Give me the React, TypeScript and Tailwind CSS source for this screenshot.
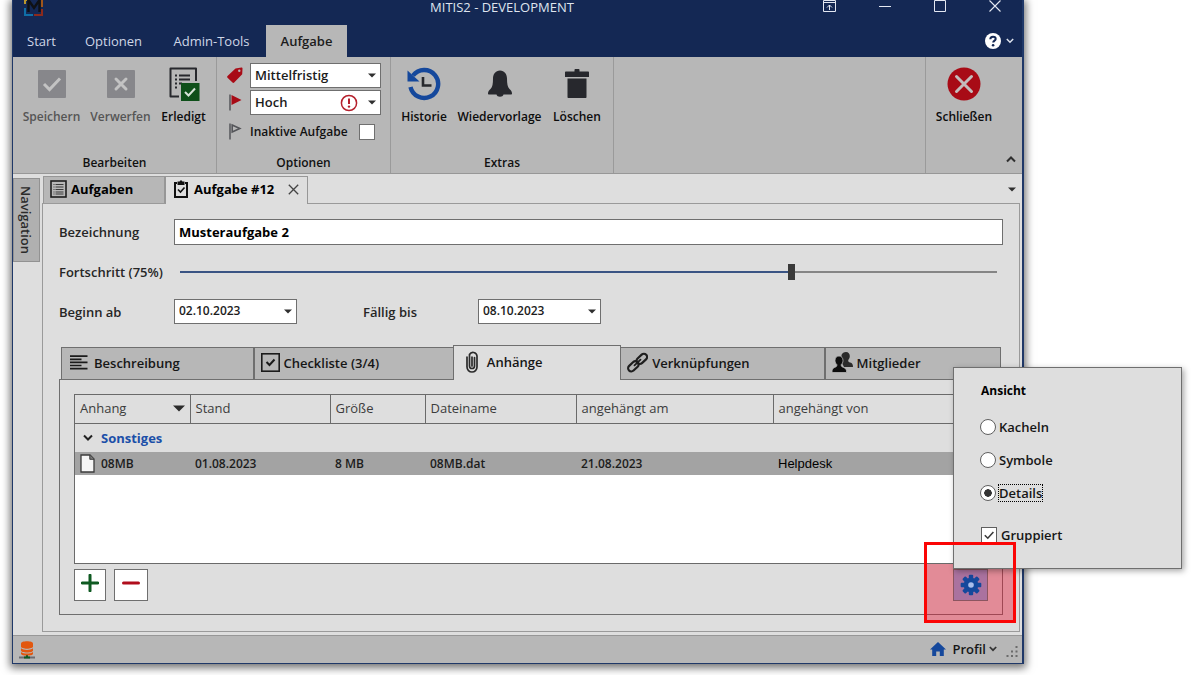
import React, { useState } from "react";
import type { ReactNode } from "react";

const caret = (
  <svg width="8" height="5" viewBox="0 0 8 5" className="block text-[#2f2f2f]" aria-hidden="true">
    <path d="M0 0.5h8L4 4.5z" fill="currentColor" />
  </svg>
);

function DropDown({
  label,
  options,
  className,
  children,
}: {
  label: string;
  options: string[];
  className: string;
  children?: ReactNode;
}) {
  return (
    <div className={`relative h-[25px] ${className}`}>
      <select
        id={label}
        aria-label={label}
        className="block h-full w-full appearance-none border border-[#6f6f6f] bg-white pb-px pl-1 leading-4 text-[#1c1c1c] outline-none"
      >
        {options.map((o) => (
          <option key={o}>{o}</option>
        ))}
      </select>
      <span className="pointer-events-none absolute inset-y-0 right-[5px] flex items-center gap-[10px]">
        {children}
        {caret}
      </span>
    </div>
  );
}

function RibbonButton({
  label,
  icon,
  className,
  disabled,
}: {
  label: string;
  icon: ReactNode;
  className: string;
  disabled?: boolean;
}) {
  return (
    <button
      disabled={disabled}
      className={`flex flex-col items-center gap-2 pt-[10px] text-[12px] leading-4 font-semibold whitespace-nowrap ${
        disabled ? "text-[#555]" : "text-[#0c0c0c]"
      } ${className}`}
    >
      <span className="flex h-[34px] items-center">{icon}</span>
      {label}
    </button>
  );
}

function RibbonGroup({ title, className, children }: { title: string; className: string; children: ReactNode }) {
  return (
    <section className={`flex flex-col justify-between border-r border-[#9a9a9a] pb-[2px] ${className}`}>
      {children}
      <h2 className="text-center text-[12px] leading-4 font-semibold text-[#111]">{title}</h2>
    </section>
  );
}

const SaveIcon = () => (
  <svg width="28" height="28" viewBox="0 0 28 28">
    <rect width="28" height="28" rx="1" fill="#87878b" />
    <path d="M6 14l5.5 5.5L22 8.500" fill="none" stroke="#c3c3c3" strokeWidth="3" />
  </svg>
);
const DiscardIcon = () => (
  <svg width="28" height="28" viewBox="0 0 28 28">
    <rect width="28" height="28" rx="1" fill="#87878b" />
    <path d="M9 9l10 10M19 9L9 19" fill="none" stroke="#c3c3c3" strokeWidth="3" strokeLinecap="round" />
  </svg>
);
const DoneIcon = () => (
  <svg width="32" height="34" viewBox="0 0 32 34">
    <path d="M28 14V1.500H2.500v28H11" fill="none" stroke="#27282d" strokeWidth="2" strokeLinejoin="round" />
    <path d="M11 8.500h11M11 12.500h11M11 16.500h3" stroke="#27282d" strokeWidth="2" />
    <path d="M7 8.500h2M7 12.500h2M7 16.500h2M7 20.500h2" stroke="#27282d" strokeWidth="2.200" />
    <rect x="13" y="16" width="18.500" height="18" fill="#0e4f19" />
    <path d="M17 25l3.500 3.500L27 21.500" fill="none" stroke="#d7e3d8" strokeWidth="2" />
  </svg>
);
const HistoryIcon = () => (
  <svg width="34" height="34" viewBox="0 0 34 34">
    <path d="M6 8.500A14 14 0 1 1 3.500 20" fill="none" stroke="#15489c" strokeWidth="4.400" />
    <path d="M0.500 3.500L12.500 14.500H0.500z" fill="#15489c" />
    <path d="M16 10v8.500H24.500" fill="none" stroke="#27282d" strokeWidth="2.600" />
  </svg>
);
const BellIcon = () => (
  <svg width="24" height="28" viewBox="0 0 24 28">
    <path
      d="M12 0.500C7.500 .8 5 4 5 8.500c0 5-.5 8.500-2.500 10.500C1 20.500 0 21.500 0 23.500c0 .6.400 1 1 1h7.500c.4 1.300 1.700 2.300 3.500 2.300s3.100-1 3.500-2.300H23c.6 0 1-.4 1-1 0-2-1-3-2.500-4.500-2-2-2.500-5.500-2.500-10.500C19 4 16.500 .8 12 .5z"
      fill="#27282d"
    />
  </svg>
);
const TrashIcon = () => (
  <svg width="24" height="30" viewBox="0 0 24 30">
    <path d="M9.500 2.500V1c0-.6.4-1 1-1h3c.6 0 1 .4 1 1v1.500h8.500c.6 0 1 .4 1 1V8H0V3.500c0-.6.400-1 1-1z" fill="#27282d" />
    <path d="M2.500 9.500h19V28c0 .6-.4 1-1 1h-17c-.6 0-1-.4-1-1z" fill="#27282d" />
  </svg>
);
const CloseIcon = () => (
  <svg width="34" height="34" viewBox="0 0 34 34">
    <circle cx="17" cy="17" r="16.500" fill="#a80b16" />
    <path d="M9.500 9.500l15 15M24.500 9.500l-15 15" stroke="#c4bcbc" strokeWidth="3" strokeLinecap="round" />
  </svg>
);

function Chevron({ up, className = "" }: { up?: boolean; className?: string }) {
  return (
    <svg width="10" height="7" viewBox="0 0 10 7" className={className} aria-hidden="true">
      <path d={up ? "M1 5.500l4-4 4 4" : "M1 1.500l4 4 4-4"} fill="none" stroke="currentColor" strokeWidth="2" />
    </svg>
  );
}

function TitleBar() {
  return (
    <header className="bg-[#142854] text-white">
      <div className="flex h-[25px] items-start pl-[11px]">
        <svg width="20" height="16" viewBox="0 0 20 16">
          <path d="M1 0v4M1 0h2" stroke="#b9962c" strokeWidth="2" />
          <path d="M1 8v7h8" fill="none" stroke="#0f6fa6" strokeWidth="2" />
          <path d="M10 15h8V9" fill="none" stroke="#8c2a1c" strokeWidth="2" />
          <path d="M18 0v7" stroke="#a0561c" strokeWidth="2" />
          <path d="M4.500 12V0L10 8l5.500-8v12" fill="none" stroke="#0f1114" strokeWidth="2.400" />
        </svg>
        <h1 className="flex-1 pl-[158px] text-center text-[13px] leading-[14px] font-normal text-[#dfe4ee]">
          MITIS2 - DEVELOPMENT
        </h1>
        <div className="flex h-3">
          <button aria-label="Menüband anheften" className="flex w-[55px] items-end justify-center">
            <svg width="13" height="12" viewBox="0 0 13 12">
              <path d="M.5 .5h12v11H.5zM0 2.500h13M6.500 10V5M4 7.500L6.500 5 9 7.500" fill="none" stroke="#e4e8f2" />
            </svg>
          </button>
          <button aria-label="Minimieren" className="flex w-[55px] items-end justify-center">
            <svg width="12" height="12" viewBox="0 0 12 12">
              <path d="M0 6.500h12" stroke="#e4e8f2" />
            </svg>
          </button>
          <button aria-label="Maximieren" className="flex w-[55px] items-end justify-center">
            <svg width="12" height="12" viewBox="0 0 12 12">
              <path d="M.5 .5h11v11H.5z" fill="none" stroke="#e4e8f2" />
            </svg>
          </button>
          <button aria-label="Fenster schließen" className="flex w-[55px] items-end justify-center">
            <svg width="12" height="12" viewBox="0 0 12 12">
              <path d="M.5 .5l11 11M11.500 .5l-11 11" stroke="#e4e8f2" strokeWidth="1.100" />
            </svg>
          </button>
        </div>
      </div>
      <nav className="flex h-8 items-stretch text-[13px] leading-4 text-[#cfd6e6]">
        <button className="w-[57px]">Start</button>
        <button className="w-[87px]">Optionen</button>
        <button className="w-[109px]">Admin-Tools</button>
        <button className="w-[81px] bg-[#b7b7b7] font-semibold text-[#1c1c1c]">Aufgabe</button>
        <button aria-label="Hilfe" className="ml-auto flex items-center gap-[5px] pr-2">
          <svg width="16" height="16" viewBox="0 0 16 16">
            <circle cx="8" cy="8" r="8" fill="#fff" />
            <path d="M5.300 6.200C5.300 4.600 6.500 3.700 8 3.700s2.700.8 2.700 2.200C10.700 7.600 8.200 7.600 8.200 9.600" fill="none" stroke="#142854" strokeWidth="2" />
            <circle cx="8.100" cy="12.200" r="1.300" fill="#142854" />
          </svg>
          <svg width="8" height="6" viewBox="0 0 8 6">
            <path d="M.8 1L4 4.200 7.200 1" fill="none" stroke="#dfe4ee" strokeWidth="1.500" />
          </svg>
        </button>
      </nav>
    </header>
  );
}

function Ribbon() {
  return (
    <div className="flex h-[117px] border-b border-[#979797] bg-[#b7b7b7]">
      <RibbonGroup title="Bearbeiten" className="w-[204px]">
        <div className="flex pl-1">
          <RibbonButton disabled label="Speichern" icon={<SaveIcon />} className="w-[69px]" />
          <RibbonButton disabled label="Verwerfen" icon={<DiscardIcon />} className="w-[69px]" />
          <RibbonButton label="Erledigt" icon={<DoneIcon />} className="w-[57px]" />
        </div>
      </RibbonGroup>
      <RibbonGroup title="Optionen" className="w-[174px]">
        <div className="flex flex-col gap-[2px] pt-[6px] pl-[10px] text-[13px] leading-4 font-semibold">
          <div className="flex items-center gap-[7px]">
            <svg width="16" height="17" viewBox="0 0 16 17">
              <path d="M8.500 1.500L14.500 .5c.6 0 1 .4 1 1l-.3 5.700-8 8.300c-.5.500-1.200.500-1.700 0L.5 10.700c-.5-.5-.5-1.200 0-1.700z" fill="#a80b16" />
              <circle cx="12.300" cy="3.800" r="1.200" fill="#b7b7b7" />
            </svg>
            <DropDown label="Zeitraum" options={["Mittelfristig", "Kurzfristig", "Langfristig"]} className="w-[131px]" />
          </div>
          <div className="flex items-center gap-[7px]">
            <svg width="16" height="17" viewBox="0 0 16 17">
              <path d="M3 .5v16" stroke="#55565a" strokeWidth="1.500" />
              <path d="M4.500 1l10 5-10 5z" fill="#a80b16" />
            </svg>
            <DropDown label="Priorität" options={["Hoch", "Mittel", "Niedrig"]} className="w-[131px]">
              <svg width="18" height="18" viewBox="0 0 18 18">
                <circle cx="9" cy="9" r="7.600" fill="#fff" stroke="#b5202c" strokeWidth="1.500" />
                <path d="M9 4.500v5.500" stroke="#b5202c" strokeWidth="2" />
                <circle cx="9" cy="12.600" r="1.200" fill="#b5202c" />
              </svg>
            </DropDown>
          </div>
          <div className="mt-[6px] flex items-center gap-[7px]">
            <svg width="16" height="17" viewBox="0 0 16 17">
              <path d="M3 .5v16" stroke="#55565a" strokeWidth="1.500" />
              <path d="M5.200 2l7.600 3.500-7.600 3.500z" fill="none" stroke="#55565a" strokeWidth="1.600" />
            </svg>
            <label className="flex w-[125px] items-center justify-between text-[12px] whitespace-nowrap text-[#111]">
              Inaktive Aufgabe
              <input type="checkbox" className="size-4 appearance-none border border-[#6f6f6f] bg-white checked:bg-[#444]" />
            </label>
          </div>
        </div>
      </RibbonGroup>
      <RibbonGroup title="Extras" className="w-[223px]">
        <div className="flex pl-[5px]">
          <RibbonButton label="Historie" icon={<HistoryIcon />} className="w-[56px]" />
          <RibbonButton label="Wiedervorlage" icon={<BellIcon />} className="w-[95px]" />
          <RibbonButton label="Löschen" icon={<TrashIcon />} className="w-[60px]" />
        </div>
      </RibbonGroup>
      <div className="flex-1 border-r border-[#9a9a9a]" />
      <div className="flex w-[96px] flex-col justify-between">
        <RibbonButton label="Schließen" icon={<CloseIcon />} className="w-[76px]" />
        <button aria-label="Menüband einklappen" className="self-end pr-[6px] pb-[10px] text-[#2f2f2f]">
          <Chevron up />
        </button>
      </div>
    </div>
  );
}

function FormFields() {
  const [progress, setProgress] = useState(75);
  return (
    <div className="text-[13px] leading-4 font-semibold text-[#262626]">
      <div className="flex h-[26px] items-center">
        <label htmlFor="bezeichnung" className="w-[115px]">
          Bezeichnung
        </label>
        <input
          id="bezeichnung"
          defaultValue="Musteraufgabe 2"
          className="h-full min-w-0 flex-1 border border-[#6f6f6f] bg-white px-1 font-bold text-black outline-none"
        />
      </div>
      <div className="flex h-[54px] items-center">
        <label htmlFor="fortschritt" className="w-[115px] whitespace-nowrap">
          Fortschritt ({progress}%)
        </label>
        <input
          id="fortschritt"
          type="range"
          min={0}
          max={100}
          value={progress}
          onChange={(e) => setProgress(Number(e.target.value))}
          style={{
            backgroundImage: `linear-gradient(to right, #3a5484 ${progress}%, #858585 ${progress}%)`,
          }}
          className="mx-[6px] h-4 min-w-0 flex-1 appearance-none bg-[length:100%_2px] bg-center bg-no-repeat outline-none [&::-webkit-slider-thumb]:h-4 [&::-webkit-slider-thumb]:w-[7px] [&::-webkit-slider-thumb]:appearance-none [&::-webkit-slider-thumb]:bg-[#3a3a3a]"
        />
      </div>
      <div className="flex items-center">
        <label htmlFor="Beginn ab" className="w-[115px]">
          Beginn ab
        </label>
        <DropDown label="Beginn ab" options={["02.10.2023"]} className="w-[123px] text-[12px]" />
        <label htmlFor="Fällig bis" className="ml-[66px] w-[115px]">
          Fällig bis
        </label>
        <DropDown label="Fällig bis" options={["08.10.2023"]} className="w-[123px] text-[12px]" />
      </div>
    </div>
  );
}

const textIcon = (
  <svg width="18" height="15" viewBox="0 0 18 15">
    <path d="M0 1.200h17.500M0 4.300h11.500M0 7.400h17.500M0 10.500h11.500M0 13.600h17.500" stroke="#1b1b1b" strokeWidth="1.700" />
  </svg>
);
const checkBoxIcon = (
  <svg width="19" height="19" viewBox="0 0 19 19">
    <rect x=".8" y=".8" width="17.400" height="17.400" fill="none" stroke="#1b1b1b" strokeWidth="1.600" />
    <path d="M5.500 9l3 3 5-5.500" fill="none" stroke="#1b1b1b" strokeWidth="2" />
  </svg>
);
const clipIcon = (
  <svg width="12" height="22" viewBox="0 0 12 22">
    <path
      d="M1 6v10a5 5 0 0 0 10 0V5a4 4 0 0 0-7.500-1.500V15a2.500 2.500 0 0 0 5 0V6.500M6 6v9"
      fill="none"
      stroke="#2b2b2b"
      strokeWidth="1.700"
      strokeLinecap="round"
    />
  </svg>
);
const linkIcon = (
  <svg width="21" height="21" viewBox="0 0 21 21">
    <g fill="none" stroke="#1f1f1f" strokeWidth="2.200">
      <rect x="8.800" y="3.700" width="12" height="6.400" rx="3.200" transform="rotate(-43 14.800 6.900)" />
      <rect x=".4" y="11.100" width="12" height="6.400" rx="3.200" transform="rotate(-43 6.400 14.300)" />
      <path d="M7.500 13.300l6-5.600" strokeWidth="1.800" strokeLinecap="round" />
    </g>
  </svg>
);
const membersIcon = (
  <svg width="21" height="21" viewBox="0 0 21 21">
    <path
      d="M14 0c2.400 0 3.800 1.800 3.800 4 0 1.700-.7 3-1.600 3.900 0 1.500.4 2 2 2.600 2 .8 2.800 1.500 2.800 4.500h-9L9.500 10V3C10.200 1.200 12 0 14 0z"
      fill="#2b2b2b"
    />
    <path
      d="M7 4c2.600 0 4 2 4 4.500 0 1.900-.8 3.300-1.800 4.200 0 1.700.5 2 2.300 2.700 2.200.8 3.100 2 3.100 5.100H0c0-3.100.5-4.300 2.600-5.100 1.800-.7 2.300-1 2.300-2.700C3.900 11.800 3 10.400 3 8.500 3 6 4.400 4 7 4z"
      fill="#0d0d0d"
      stroke="#b7b7b7"
      strokeWidth=".8"
    />
  </svg>
);

function Gear() {
  return (
    <svg width="22" height="22" viewBox="-11 -11 22 22">
      <g fill="#15489c">
        <circle r="7.300" />
        <rect x="-2.200" y="-10.300" width="4.400" height="20.600" rx="1" />
        <rect x="-2.200" y="-10.300" width="4.400" height="20.600" rx="1" transform="rotate(45)" />
        <rect x="-2.200" y="-10.300" width="4.400" height="20.600" rx="1" transform="rotate(90)" />
        <rect x="-2.200" y="-10.300" width="4.400" height="20.600" rx="1" transform="rotate(135)" />
      </g>
      <circle r="2.800" fill="#a9bdea" />
    </svg>
  );
}

function ViewPopup() {
  const [view, setView] = useState("Details");
  const [grouped, setGrouped] = useState(true);
  return (
    <div className="absolute bottom-full left-0 h-[202px] w-[229px] border border-[#6f6f6f] bg-[#dedede] pt-[15px] pl-[27px] text-[13px] leading-4 font-semibold text-[#161616] shadow-[2px_2px_6px_rgba(0,0,0,0.35)]">
      <h2 className="text-[12px] font-bold text-black">Ansicht</h2>
      <fieldset className="mt-5 flex flex-col gap-[17px]">
        {["Kacheln", "Symbole", "Details"].map((v) => (
          <label key={v} className="flex h-4 items-center gap-[2px]">
            <input
              type="radio"
              name="ansicht"
              checked={view === v}
              onChange={() => setView(v)}
              className="-ml-px size-4 appearance-none rounded-full border border-[#5f5f5f] bg-white checked:bg-[radial-gradient(circle,#333_3.5px,#fff_4px)]"
            />
            <span className={`border border-dotted ${view === v ? "border-black" : "border-transparent"}`}>{v}</span>
          </label>
        ))}
      </fieldset>
      <label className="mt-[26px] flex h-4 items-center gap-1">
        <span className="grid">
          <input
            type="checkbox"
            checked={grouped}
            onChange={(e) => setGrouped(e.target.checked)}
            className="size-4 appearance-none border border-[#5f5f5f] bg-white [grid-area:1/1]"
          />
          {grouped && (
            <svg width="16" height="16" viewBox="0 0 16 16" className="pointer-events-none [grid-area:1/1]">
              <path d="M3.800 8.200l3 3L12.400 5" fill="none" stroke="#3a3a3a" strokeWidth="1.600" />
            </svg>
          )}
        </span>
        Gruppiert
      </label>
    </div>
  );
}

const columns = [
  { title: "Anhang", width: "w-[115px]" },
  { title: "Stand", width: "w-[140px]" },
  { title: "Größe", width: "w-[95px]" },
  { title: "Dateiname", width: "w-[151px]" },
  { title: "angehängt am", width: "w-[197px]" },
  { title: "angehängt von", width: "" },
];

function Attachments() {
  return (
    <div className="flex flex-1 flex-col border border-[#6f6f6f] px-[14px] pt-[14px] pb-[13px]">
      <div className="min-h-[170px] flex-1 border border-[#6a6a6a] bg-white">
        <table className="w-full table-fixed border-collapse text-left text-[13px] leading-4 text-[#3c3c3c]">
          <thead>
            <tr className="h-7 border-b border-[#6a6a6a] bg-[#dedede]">
              {columns.map((c, i) => (
                <th key={c.title} className={`border-r border-[#6a6a6a] px-[5px] font-normal last:border-r-0 ${c.width}`}>
                  <span className="flex items-center justify-between pb-px whitespace-nowrap">
                    {c.title}
                    {i === 0 && (
                      <svg width="12" height="7" viewBox="0 0 12 7" aria-hidden="true">
                        <path d="M0 .5h12L6 6.500z" fill="#2b2b2b" />
                      </svg>
                    )}
                  </span>
                </th>
              ))}
            </tr>
          </thead>
          <tbody className="text-[12px] font-semibold text-[#1c1c1c]">
            <tr className="h-[29px] bg-[#dedede]">
              <td colSpan={6} className="px-2">
                <button className="flex items-center gap-2 text-[13px] font-bold text-[#1b4fa8]">
                  <Chevron className="text-[#222]" />
                  Sonstiges
                </button>
              </td>
            </tr>
            <tr className="h-[23px] bg-[#a3a3a3]">
              <td className="px-[5px]">
                <span className="flex items-center gap-[6px]">
                  <svg width="15" height="19" viewBox="0 0 15 19">
                    <path d="M1 1h9l4 4v13H1z" fill="#f6f6f6" stroke="#3c3c3c" strokeWidth="1.300" />
                    <path d="M9.800 1v4.300H14" fill="#777" stroke="#3c3c3c" />
                  </svg>
                  08MB
                </span>
              </td>
              <td className="px-[5px]">01.08.2023</td>
              <td className="px-[5px]">8 MB</td>
              <td className="px-[5px]">08MB.dat</td>
              <td className="px-[5px]">21.08.2023</td>
              <td className="px-[5px] font-['Liberation_Sans',sans-serif] text-[13px] font-normal text-black">Helpdesk</td>
            </tr>
          </tbody>
        </table>
      </div>
      <div className="mt-[5px] flex h-8 items-stretch">
        <button aria-label="Anhang hinzufügen" className="flex w-8 items-start justify-center border border-[#6f6f6f] bg-white pt-1">
          <svg width="18" height="18" viewBox="0 0 18 18">
            <path d="M9 1.200v15.600M1.200 9h15.600" stroke="#0f5a22" strokeWidth="3" strokeLinecap="round" />
          </svg>
        </button>
        <button aria-label="Anhang entfernen" className="ml-2 flex w-[34px] items-start justify-center border border-[#6f6f6f] bg-white pt-1">
          <svg width="18" height="18" viewBox="0 0 18 18">
            <path d="M1.500 9h15" stroke="#b00d1c" strokeWidth="3" strokeLinecap="round" />
          </svg>
        </button>
        <div className="relative ml-auto w-[35px]">
          <div className="absolute -top-[5px] -right-[28px] -bottom-[22px] -left-[29px] bg-[#e80e2c]/40" />
          <button aria-label="Ansicht einstellen" className="relative flex h-full w-full items-center justify-center border border-[#8b5560] bg-[#aa729f]">
            <Gear />
          </button>
          <ViewPopup />
          <div className="pointer-events-none absolute -top-[27px] -right-[28px] -bottom-[22px] -left-[29px] border-3 border-[#fb0505]" />
        </div>
      </div>
    </div>
  );
}

const sideTab = "flex h-[33px] items-center border border-[#6f6f6f] bg-[#b7b7b7] pb-[2px]";

function DetailTabs() {
  return (
    <div className="relative mx-[2px] -mb-px flex items-end text-[13px] leading-4 font-semibold whitespace-nowrap text-[#161616]">
      <button className={`${sideTab} flex-[183] gap-[6px] pl-2`}>{textIcon}Beschreibung</button>
      <button className={`${sideTab} flex-[191] gap-[3px] border-r-0 pl-[6px]`}>{checkBoxIcon}Checkliste (3/4)</button>
      <button className="flex h-[35px] flex-[154] items-center gap-[9px] border border-b-0 border-[#6f6f6f] bg-[#dedede] pb-[3px] pl-[12px]">
        {clipIcon}Anhänge
      </button>
      <button className={`${sideTab} flex-[196] gap-1 border-l-0 pl-[6px]`}>{linkIcon}Verknüpfungen</button>
      <button className={`${sideTab} flex-[168] gap-1 pl-[6px]`}>{membersIcon}Mitglieder</button>
    </div>
  );
}

function DocumentArea() {
  return (
    <main className="flex flex-1 bg-[#dedede] pb-[3px]">
      <button className="mt-1 flex h-[84px] w-[27px] items-center justify-center border border-[#929292] bg-[#b0b0b0] pr-[2px] text-[13px] leading-4 font-semibold text-[#2b2b2b] [writing-mode:vertical-rl]">
        Navigation
      </button>
      <div className="mr-[2px] ml-[2px] flex min-w-0 flex-1 flex-col pt-[2px]">
        <div className="relative -mb-px flex h-[28px] items-end text-[13px] leading-4 font-bold text-black">
          <button className="mb-px ml-px flex h-[27px] w-[122px] items-center gap-1 border border-b-0 border-[#979797] bg-[#b7b7b7] pb-[3px] pl-[6px]">
            <svg width="17" height="18" viewBox="0 0 17 18">
              <rect x="1" y="1" width="15" height="16" fill="none" stroke="#1d1d1d" strokeWidth="1.600" />
              <path d="M3.500 4.500h1M3.500 7h1M3.500 9.500h1M3.500 12h1M3.500 14h1M5.500 4.500h8M5.500 7h8M5.500 9.500h8M5.500 12h8M5.500 14h8" stroke="#3a3a3a" strokeWidth="1.200" />
            </svg>
            Aufgaben
          </button>
          <div className="flex h-[28px] w-[143px] items-center border border-b-0 border-[#979797] bg-[#dedede] pb-[3px] pl-2">
            <svg width="14" height="18" viewBox="0 0 14 18">
              <path d="M3 3H1v14h12V3h-2" fill="none" stroke="#111" strokeWidth="2" />
              <path d="M3.500 1.500h2L7 0l1.500 1.500h2V5h-7z" fill="#111" />
              <path d="M4 9.500l2.500 2.500 4-4.500" fill="none" stroke="#111" strokeWidth="1.600" />
            </svg>
            <button className="ml-[6px] whitespace-nowrap">Aufgabe #12</button>
            <button aria-label="Registerkarte schließen" className="mr-2 ml-auto">
              <svg width="11" height="11" viewBox="0 0 11 11">
                <path d="M.8 .8l9.400 9.400M10.200 .8L.8 10.200" stroke="#444" strokeWidth="1.300" />
              </svg>
            </button>
          </div>
          <button aria-label="Registerkarten auflisten" className="mr-1 ml-auto self-center pb-[2px]">
            {caret}
          </button>
        </div>
        <div className="flex flex-1 flex-col border border-[#9a9a9a] pt-[15px] pr-4 pb-4 pl-4">
          <FormFields />
          <div className="mt-[21px] flex flex-1 flex-col">
            <DetailTabs />
            <Attachments />
          </div>
        </div>
      </div>
    </main>
  );
}

function StatusBar() {
  return (
    <footer className="flex h-7 items-center border-t border-[#979797] bg-[#b7b7b7] pr-1 pl-[6px]">
      <svg width="16" height="18" viewBox="0 0 16 18">
        <path d="M2 2.500C2 1.200 4.700.3 8 .3s6 .9 6 2.200v3C14 6.800 11.300 7.700 8 7.700s-6-.9-6-2.200z" fill="#e2570f" />
        <path d="M2 7.300c1.500 1.200 3.700 1.600 6 1.600s4.500-.4 6-1.600v2.200c0 1.200-2.700 2-6 2s-6-.8-6-2zM2 11.100c1.500 1 3.700 1.500 6 1.500s4.500-.5 6-1.500v1.700c0 1.200-2.700 1.900-6 1.900s-6-.7-6-1.900z" fill="#e2570f" />
        <path d="M0 16.500h16" stroke="#6b6b70" strokeWidth="2" />
        <path d="M5 17.500v-2h2v-1.300h2v1.300h2v2z" fill="#0e5a20" />
      </svg>
      <button className="ml-auto flex items-center pb-px text-[13px] leading-4 font-semibold text-[#161616]">
        <svg width="16" height="14" viewBox="0 0 16 14" className="mr-[7px]">
          <path d="M8 0L0 7.500h2.200V14h4V9.500h3.600V14h4V7.500H16z" fill="#15489c" />
        </svg>
        Profil
        <svg width="8" height="6" viewBox="0 0 8 6" className="ml-[3px]">
          <path d="M.8 1L4 4.200 7.200 1" fill="none" stroke="#333" strokeWidth="1.700" />
        </svg>
      </button>
      <svg width="12" height="12" viewBox="0 0 12 12" className="mt-1 ml-[9px] text-[#6b6b6b]">
        <path d="M9.500 0h2v2h-2zM9.500 4.500h2v2h-2zM5 4.500h2v2H5zM9.500 9h2v2h-2zM5 9h2v2H5zM.5 9h2v2h-2z" fill="currentColor" />
      </svg>
    </footer>
  );
}

export default function App() {
  return (
    <div className="flex min-h-screen flex-col bg-white pr-[176px] pb-[11px] pl-3 font-['Open_Sans','Noto_Sans',sans-serif]">
      <div className="flex flex-1 flex-col border-r-2 border-b border-l border-[#1f3868] shadow-[0_2px_8px_2px_rgba(0,0,0,0.55)]">
        <TitleBar />
        <Ribbon />
        <DocumentArea />
        <StatusBar />
      </div>
    </div>
  );
}
